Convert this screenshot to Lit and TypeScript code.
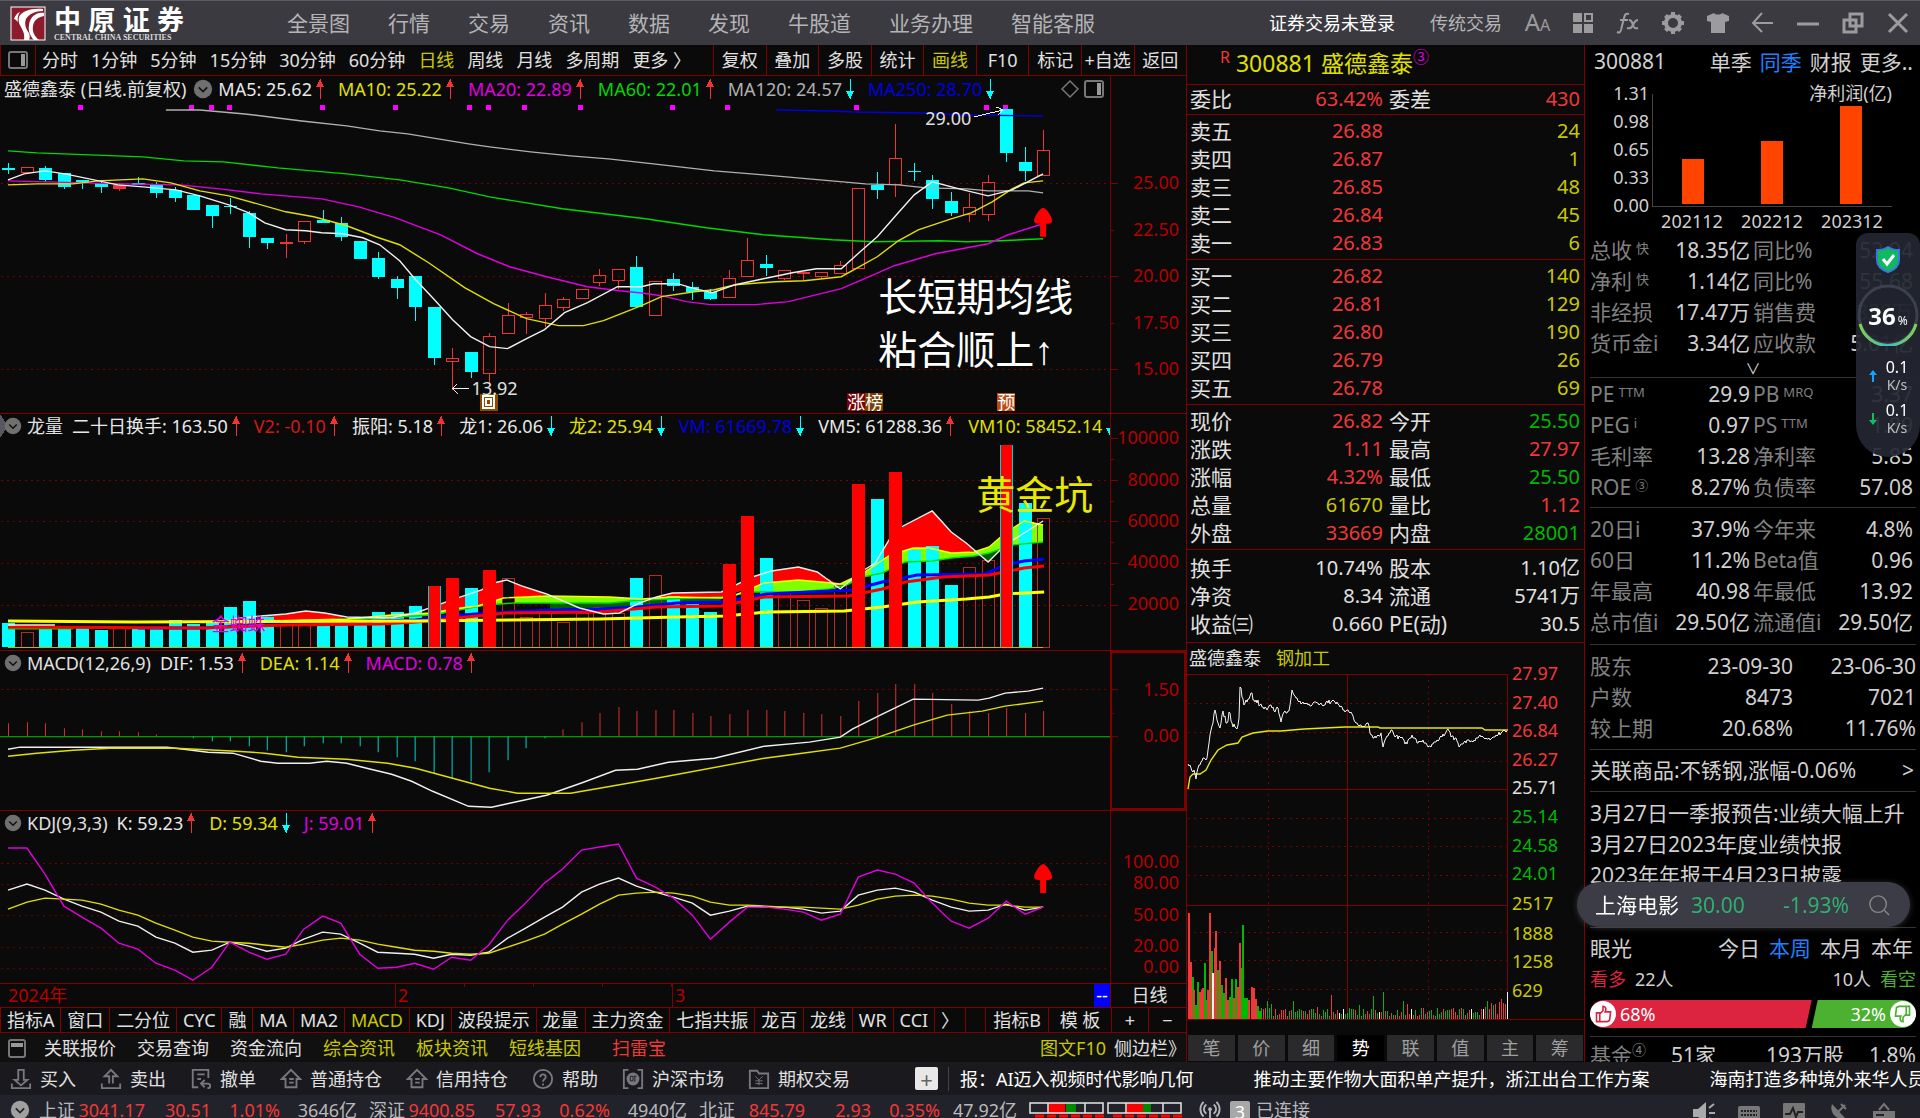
import { LitElement, html, svg, css, nothing } from "lit";
import { customElement } from "lit/decorators.js";
import { classMap } from "lit/directives/class-map.js";
import { styleMap } from "lit/directives/style-map.js";

type Pt = [number, number];

/* ---------- daily chart data ---------- */

const STEP = 18.5;
const FIRST = 8;
const cx = (i: number) => Math.round(FIRST + STEP * i);

// [kind, body top, body bottom, high, low]; d = falling, u = rising, f = rising drawn solid
const CANDLES: [string, number, number, number, number][] = [
  ["d", 168, 170, 163, 174], ["u", 167, 172, 167, 172], ["d", 168, 180, 166, 182], ["d", 173, 187, 173, 189],
  ["d", 180, 183, 180, 189], ["d", 183, 187, 182, 193], ["f", 185, 189, 183, 191], ["d", 183, 185, 177, 185],
  ["d", 185, 193, 182, 198], ["d", 190, 198, 187, 202], ["d", 195, 210, 195, 210], ["d", 205, 216, 205, 228],
  ["d", 206, 207, 198, 214], ["d", 213, 237, 211, 248], ["d", 238, 243, 238, 249], ["f", 242, 244, 234, 258],
  ["u", 221, 241, 221, 244], ["d", 220, 223, 210, 223], ["d", 223, 237, 217, 241], ["d", 241, 259, 241, 259],
  ["d", 258, 277, 252, 279], ["d", 279, 288, 276, 299], ["d", 276, 307, 276, 321], ["d", 307, 358, 307, 365],
  ["u", 358, 361, 348, 390], ["d", 352, 372, 352, 378], ["u", 336, 373, 333, 384], ["u", 315, 333, 303, 333],
  ["u", 314, 317, 312, 334], ["u", 305, 318, 293, 327], ["u", 299, 307, 297, 311], ["u", 289, 298, 289, 298],
  ["u", 275, 282, 269, 286], ["u", 269, 280, 269, 289], ["d", 267, 307, 256, 307], ["u", 281, 315, 281, 315],
  ["d", 279, 286, 273, 291], ["d", 287, 292, 282, 300], ["d", 292, 299, 289, 300], ["u", 278, 297, 270, 297],
  ["u", 260, 276, 238, 276], ["d", 264, 268, 255, 276], ["u", 270, 278, 270, 280], ["f", 272, 274, 272, 281],
  ["u", 272, 276, 272, 278], ["u", 265, 273, 261, 273], ["u", 188, 268, 188, 269], ["d", 185, 190, 172, 199],
  ["u", 158, 184, 124, 197], ["d", 171, 172, 163, 181], ["d", 180, 199, 175, 209], ["d", 201, 213, 192, 216],
  ["u", 207, 214, 193, 222], ["u", 182, 214, 175, 221], ["d", 109, 153, 109, 162], ["d", 162, 171, 147, 181],
  ["u", 150, 175, 130, 175],
];

const MA: { color: string; pts: Pt[] }[] = [
  { color: "#0000e0", pts: [[777, 110], [833, 111], [854, 112], [923, 113], [968, 115], [1044, 116]] },
  { color: "#b0b0b0", pts: [[166, 110], [200, 110], [245, 114], [302, 121], [347, 126], [380, 131], [408, 134], [469, 144], [490, 147], [531, 152], [571, 156], [609, 159], [654, 164], [715, 171], [764, 175], [821, 180], [866, 184], [899, 185], [927, 188], [968, 189], [989, 191], [1029, 191], [1044, 193]] },
  { color: "#00d800", pts: [[8, 151], [37, 153], [143, 157], [184, 161], [224, 162], [278, 168], [347, 174], [400, 180], [449, 188], [490, 197], [563, 209], [646, 219], [707, 228], [764, 235], [833, 240], [874, 242], [940, 241], [968, 242], [1001, 241], [1044, 239]] },
  { color: "#e000e0", pts: [[8, 181], [122, 184], [180, 185], [220, 189], [261, 194], [322, 199], [359, 207], [396, 218], [441, 235], [478, 254], [510, 267], [547, 277], [588, 287], [620, 291], [640, 293], [662, 296], [687, 302], [711, 305], [756, 305], [789, 302], [842, 289], [870, 277], [895, 266], [936, 254], [989, 244], [1009, 235], [1044, 224]] },
  { color: "#e0e000", pts: [[8, 185], [37, 184], [73, 184], [98, 181], [143, 179], [171, 183], [200, 191], [229, 196], [286, 212], [314, 217], [347, 226], [376, 237], [400, 245], [429, 263], [465, 288], [494, 304], [527, 319], [559, 326], [584, 326], [604, 321], [642, 306], [662, 297], [695, 292], [715, 290], [736, 285], [776, 282], [805, 281], [842, 277], [878, 257], [899, 241], [919, 230], [952, 219], [972, 213], [993, 202], [1013, 189], [1025, 183], [1044, 181]] },
  { color: "#f0f0f0", pts: [[8, 180], [24, 174], [45, 171], [65, 174], [94, 180], [118, 185], [143, 187], [176, 190], [200, 196], [229, 205], [249, 213], [265, 223], [286, 230], [306, 231], [322, 233], [343, 234], [363, 238], [380, 245], [400, 261], [416, 280], [433, 298], [453, 320], [471, 337], [490, 347], [508, 349], [527, 339], [545, 330], [565, 313], [588, 303], [618, 287], [642, 287], [654, 284], [678, 284], [695, 289], [713, 293], [736, 285], [764, 279], [793, 273], [817, 269], [842, 269], [862, 251], [878, 237], [899, 213], [915, 195], [933, 182], [960, 189], [989, 196], [1013, 190], [1044, 174]] },
];

const EVENT_DOTS = [80, 191, 211, 229, 322, 395, 469, 488, 524, 580, 673, 728, 857, 987, 1006];

// [kind, top]; c = cyan, h = hollow, k = hollow on black, r = solid red, e = solid red with cyan edge
const VOLUME: [string, number][] = [
  ["c", 623], ["h", 632], ["c", 627], ["c", 627], ["c", 627], ["c", 630], ["h", 628], ["c", 627], ["c", 627], ["c", 620],
  ["c", 624], ["c", 623], ["c", 607], ["c", 601], ["c", 617], ["h", 624], ["h", 618], ["c", 622], ["c", 622], ["c", 621],
  ["c", 612], ["c", 612], ["c", 606], ["e", 586], ["r", 578], ["c", 588], ["r", 570], ["k", 578], ["h", 617], ["h", 613],
  ["h", 622], ["h", 613], ["h", 607], ["h", 613], ["c", 578], ["h", 575], ["c", 596], ["c", 603], ["c", 612], ["r", 564],
  ["r", 516], ["c", 558], ["h", 593], ["h", 600], ["h", 608], ["h", 585], ["r", 484], ["c", 499], ["r", 472], ["c", 550],
  ["c", 546], ["c", 585], ["h", 567], ["h", 560], ["e", 445], ["c", 503], ["h", 518],
];

const VM5: Pt[] = [[233, 619], [261, 616], [286, 614], [306, 611], [325, 613], [347, 617], [390, 618], [416, 613], [441, 604], [461, 597], [482, 590], [494, 583], [507, 580], [522, 586], [547, 594], [580, 608], [604, 614], [620, 613], [638, 604], [657, 597], [673, 593], [722, 592], [753, 577], [772, 571], [799, 567], [818, 572], [841, 589], [860, 573], [876, 563], [891, 538], [902, 527], [933, 511], [952, 532], [967, 543], [989, 562], [1006, 545], [1025, 533], [1044, 521]];
const VM10: Pt[] = [[233, 622], [347, 619], [370, 617], [392, 615], [433, 613], [453, 609], [478, 606], [504, 598], [547, 596], [610, 597], [642, 599], [673, 597], [722, 598], [734, 596], [753, 588], [765, 583], [799, 580], [822, 582], [841, 584], [864, 573], [891, 555], [914, 548], [930, 548], [952, 553], [975, 552], [990, 547], [1006, 533], [1025, 521], [1044, 525]];
const VM20: Pt[] = [[233, 622], [347, 620], [433, 615], [486, 605], [514, 603], [610, 603], [642, 600], [722, 597], [753, 592], [799, 592], [830, 589], [845, 586], [864, 577], [883, 573], [906, 562], [933, 561], [952, 558], [975, 556], [990, 553], [1013, 545], [1044, 542]];
const RED_AREAS: Pt[][] = [
  [[261, 617], [286, 614], [306, 611], [325, 613], [347, 617], [325, 620], [261, 622]],
  [[441, 604], [461, 597], [482, 590], [494, 583], [507, 580], [522, 586], [547, 595], [514, 598], [504, 599], [478, 607], [441, 612]],
  [[657, 597], [673, 593], [722, 592], [753, 577], [772, 571], [799, 567], [818, 572], [836, 583], [799, 580], [765, 583], [745, 590], [722, 597]],
  [[864, 573], [876, 563], [891, 538], [902, 527], [933, 511], [952, 532], [967, 543], [977, 551], [952, 553], [930, 548], [914, 548], [891, 556]],
];
const VOL_LINES: { color: string; pts: Pt[] }[] = [
  { color: "#00e000", pts: [[8, 628], [73, 628]] },
  { color: "#0000ff", pts: [[138, 628], [204, 628], [286, 623], [416, 620], [449, 616], [490, 613], [551, 610], [600, 609], [638, 607], [677, 603], [722, 602], [768, 594], [853, 590], [883, 582], [918, 575], [986, 574], [1006, 565], [1025, 561], [1045, 559]] },
  { color: "#ff0000", pts: [[8, 627], [204, 628], [286, 625], [380, 624], [416, 622], [457, 618], [506, 613], [600, 612], [657, 607], [722, 606], [765, 597], [849, 596], [883, 589], [906, 582], [944, 577], [990, 575], [1025, 568], [1045, 566]] },
  { color: "#ffff00", pts: [[8, 621], [135, 622], [416, 621], [600, 619], [677, 617], [726, 616], [768, 612], [845, 611], [883, 607], [918, 602], [967, 599], [990, 597], [1006, 594], [1045, 592]] },
];

const HIST = [724, 723, 724, 729, 730, 732, 732, 733, 735, 737, 739, 742, 742, 747, 751, 753, 747, 744, 744, 747, 753, 758, 762, 774, 779, 782, 773, 761, 749, 739, 730, 723, 714, 708, 712, 711, 711, 714, 717, 715, 711, 711, 712, 714, 715, 717, 702, 694, 685, 685, 694, 705, 712, 714, 709, 714, 712];
const DIF: Pt[] = [[8, 750], [20, 748], [167, 748], [184, 750], [208, 753], [233, 754], [261, 762], [278, 764], [310, 764], [327, 762], [347, 764], [367, 769], [392, 775], [412, 782], [433, 792], [469, 807], [492, 808], [510, 804], [547, 796], [584, 783], [616, 771], [638, 770], [669, 763], [715, 759], [765, 747], [810, 743], [841, 738], [853, 730], [883, 715], [914, 700], [979, 701], [990, 699], [1006, 694], [1029, 692], [1044, 689]];
const DEA: Pt[] = [[8, 757], [37, 754], [73, 751], [110, 749], [176, 749], [237, 752], [265, 754], [298, 758], [347, 760], [388, 764], [416, 769], [453, 779], [490, 789], [518, 794], [571, 794], [600, 789], [657, 779], [765, 759], [803, 754], [841, 749], [879, 738], [914, 726], [948, 716], [983, 712], [1006, 707], [1044, 702]];

const K = [890, 884, 890, 899, 906, 912, 921, 926, 937, 943, 952, 950, 942, 946, 951, 948, 939, 932, 934, 943, 952, 953, 954, 958, 954, 955, 952, 938, 928, 917, 907, 892, 884, 878, 886, 892, 897, 903, 915, 911, 906, 907, 907, 909, 913, 911, 895, 890, 888, 892, 900, 907, 911, 910, 904, 910, 907];
const D = [909, 902, 898, 899, 900, 904, 910, 915, 923, 930, 937, 941, 942, 943, 945, 947, 944, 940, 938, 940, 944, 947, 950, 951, 953, 954, 953, 947, 941, 934, 924, 914, 904, 895, 893, 892, 893, 896, 902, 905, 905, 906, 907, 907, 908, 909, 905, 899, 896, 895, 896, 899, 903, 905, 905, 907, 907];
const J = [848, 848, 874, 906, 917, 928, 943, 949, 963, 970, 980, 967, 942, 952, 959, 954, 929, 916, 923, 954, 968, 967, 963, 969, 957, 960, 945, 920, 903, 883, 869, 850, 847, 844, 878, 887, 898, 915, 939, 922, 907, 907, 909, 912, 920, 914, 877, 870, 874, 883, 903, 921, 928, 918, 901, 914, 907];

/* ---------- intraday data ---------- */

const PRICE: Pt[] = [[1188, 764], [1191, 768], [1194, 770], [1196, 779], [1198, 768], [1201, 762], [1204, 758], [1206, 760], [1209, 743], [1211, 730], [1213, 723], [1215, 710], [1218, 723], [1220, 728], [1223, 711], [1226, 723], [1230, 713], [1232, 723], [1237, 729], [1239, 718], [1240, 687], [1244, 705], [1247, 702], [1252, 693], [1254, 700], [1260, 705], [1267, 710], [1271, 705], [1274, 711], [1278, 708], [1281, 722], [1284, 712], [1289, 711], [1292, 690], [1296, 698], [1302, 703], [1310, 706], [1317, 703], [1322, 705], [1332, 701], [1338, 704], [1343, 710], [1351, 712], [1355, 722], [1362, 727], [1368, 723], [1371, 735], [1376, 738], [1381, 733], [1383, 747], [1386, 738], [1391, 730], [1395, 737], [1400, 737], [1407, 744], [1412, 735], [1418, 743], [1423, 740], [1428, 747], [1435, 742], [1442, 737], [1448, 729], [1451, 737], [1455, 738], [1459, 747], [1468, 740], [1475, 741], [1480, 735], [1487, 739], [1494, 737], [1501, 733], [1507, 731]];
const AVG: Pt[] = [[1188, 789], [1190, 777], [1193, 774], [1200, 774], [1206, 770], [1211, 760], [1218, 750], [1227, 745], [1238, 743], [1242, 737], [1253, 733], [1268, 731], [1281, 731], [1304, 729], [1345, 727], [1378, 727], [1380, 728], [1482, 728], [1485, 730], [1508, 730]];
const OPENING: [number, number, string][] = [
  [1188, 913, "r"], [1190, 962, "r"], [1192, 977, "g"], [1193, 990, "r"], [1195, 1005, "g"], [1197, 982, "g"], [1199, 992, "r"], [1201, 990, "r"],
  [1202, 988, "r"], [1204, 963, "g"], [1205, 1000, "g"], [1207, 990, "r"], [1209, 913, "r"], [1211, 951, "g"], [1212, 973, "w"], [1214, 948, "r"],
  [1215, 931, "r"], [1217, 970, "g"], [1219, 961, "r"], [1221, 985, "g"], [1223, 993, "g"], [1225, 978, "r"], [1227, 1000, "r"], [1229, 997, "g"],
  [1231, 979, "g"], [1233, 998, "r"], [1235, 979, "g"], [1237, 987, "r"], [1239, 943, "r"], [1241, 968, "g"], [1242, 925, "g"], [1244, 998, "g"],
  [1246, 998, "g"], [1248, 1000, "r"], [1251, 987, "r"], [1253, 988, "r"], [1255, 999, "r"], [1257, 1006, "g"],
];
const SPIKES: Record<number, [number, string]> = {
  1267: [1001, "g"], 1271: [1004, "g"], 1293: [1001, "g"], 1317: [1007, "r"], 1331: [995, "r"], 1359: [1005, "g"], 1373: [996, "g"],
  1383: [992, "g"], 1403: [1001, "g"], 1407: [1004, "r"], 1421: [1008, "g"], 1437: [1008, "g"], 1459: [1009, "g"], 1471: [1009, "w"],
  1481: [1009, "r"], 1491: [1003, "r"], 1495: [1004, "r"], 1499: [1002, "r"], 1501: [999, "r"], 1503: [1003, "r"], 1507: [992, "w"],
};
const TONE: Record<string, string> = { r: "#f03838", g: "#00b800", w: "#f0f0f0" };

function noise(seed: number) {
  let s = seed;
  return () => ((s = (s * 1103515245 + 12345) % 2147483648) / 2147483648);
}

function intradayVolume(): [number, number, string][] {
  const rnd = noise(7);
  const bars = [...OPENING];
  for (let x = 1259; x < 1508; x += 2) {
    const late = x > 1478 ? 8 : 0;
    bars.push(SPIKES[x] ? [x, ...SPIKES[x]] : [x, Math.round(1016 - rnd() * 8 - rnd() * late), "rggrw"[Math.floor(rnd() * 4.3)]]);
  }
  return bars;
}

function intradayPrice(): Pt[] {
  const rnd = noise(3);
  const out: Pt[] = [];
  PRICE.forEach(([x, y], n) => {
    out.push([x, y]);
    const next = PRICE[n + 1];
    if (!next) return;
    const amp = x < 1260 ? 7 : 4;
    for (let px = x + 1; px < next[0]; px++) {
      out.push([px, Math.round(y + ((next[1] - y) * (px - x)) / (next[0] - x) + (rnd() - 0.5) * amp)]);
    }
  });
  return out;
}

/* ---------- drawing helpers ---------- */

const join = (pts: Pt[]) => pts.map((p) => p.join(",")).join(" ");
const line = (pts: Pt[], color: string, width = 1.4) =>
  svg`<polyline class="curve" points=${join(pts)} fill="none" stroke=${color} stroke-width=${width} />`;
const series = (ys: number[]): Pt[] => ys.map((y, i) => [cx(i), y]);
const dotted = (ys: number[], x1: number, x2: number) =>
  ys.map((y) => svg`<path class="dots" d="M${x1} ${y + 0.5}H${x2}" />`);
const ticks = (major: number[], minor: number[]) => svg`
  ${major.map((y) => svg`<path class="rule" d="M1111 ${y + 0.5}h8" />`)}
  ${minor.map((y) => svg`<path class="rule" d="M1111 ${y + 0.5}h4" />`)}`;
const bigArrow = (y: number) =>
  svg`<path class="curve" d="M1044 ${y}c3 0 9 9 9 13 0 3-3 3-6 3v13h-6v-13c-3 0-6 0-6-3 0-4 6-13 9-13z" fill="#f00" />`;

function candle([kind, top, bottom, high, low]: (typeof CANDLES)[number], i: number) {
  const x = cx(i);
  const h = Math.max(bottom - top, 1);
  if (kind === "u") {
    return svg`<path d="M${x + 0.5} ${high}V${top}M${x + 0.5} ${bottom}V${low}" stroke="#f03434" />
      <rect x=${x - 5.5} y=${top + 0.5} width="12" height=${h} fill="none" stroke="#f03434" />`;
  }
  const color = kind === "d" ? "#00ffff" : "#f03434";
  return svg`<path d="M${x + 0.5} ${high}V${low}" stroke=${color} /><rect x=${x - 6} y=${top} width="13" height=${h} fill=${color} />`;
}

function volumeBar(kind: string, top: number, i: number) {
  const x = cx(i);
  const h = 647 - top;
  if (kind === "h" || kind === "k") {
    return svg`<rect x=${x - 5.5} y=${top + 0.5} width="12" height=${h} fill=${kind === "k" ? "#0a0a0a" : "none"} stroke="#b82828" />`;
  }
  if (kind === "e") {
    return svg`<rect x=${x - 6} y=${top} width="13" height=${h} fill="#00d0d0" /><rect x=${x - 5} y=${top} width="11" height=${h} fill="#ff0000" />`;
  }
  return svg`<rect x=${x - 6} y=${top} width="13" height=${h} fill=${kind === "c" ? "#00ffff" : "#ff0000"} />`;
}

const icon = (body: unknown, size = 24, box = 24) =>
  html`<svg class="icon" width=${size} height=${size} viewBox="0 0 ${box} ${box}" aria-hidden="true">${body}</svg>`;

const ICON = {
  grid: svg`<path d="M2 2h9v9H2zM2 13h9v9H2zM13 13h9v9h-9z" fill="currentColor"/><path d="M14 3h7v7h-7z" fill="none" stroke="currentColor" stroke-width="2"/>`,
  fx: svg`<path d="M13 3c-3-1-4 0-5 4L5 19c-1 3-2 3-4 2M4 9h8M13 9c3 0 3 2 4 5s2 4 5 3M22 9c-3 0-4 3-5 5s-3 4-6 3" fill="none" stroke="currentColor" stroke-width="2"/>`,
  gear: svg`<path d="M10 1h4v4h-4zM10 19h4v4h-4zM1 10h4v4H1zM19 10h4v4h-4zM3 6l3-3 3 3-3 3zM15 6l3-3 3 3-3 3zM3 18l3-3 3 3-3 3zM15 18l3-3 3 3-3 3z" fill="currentColor"/><circle cx="12" cy="12" r="7" fill="none" stroke="currentColor" stroke-width="4"/>`,
  shirt: svg`<path d="M8 2c1 2 7 2 8 0l7 3 0 5-4 1v11H5V11l-4-1V5z" fill="currentColor"/>`,
  back: svg`<path d="M11 2L2 12l9 9M2 12h20" fill="none" stroke="currentColor" stroke-width="2"/>`,
  min: svg`<path d="M1 13h22" stroke="currentColor" stroke-width="3"/>`,
  restore: svg`<path d="M9 3h12v12H9zM3 9h12v12H3z" fill="none" stroke="currentColor" stroke-width="3"/>`,
  close: svg`<path d="M3 3l18 18M21 3L3 21" stroke="currentColor" stroke-width="3"/>`,
  panel: svg`<rect x="3" y="4" width="18" height="16" rx="2" fill="none" stroke="#777" stroke-width="2"/><path d="M15 6h4v12h-4z" fill="#999"/>`,
  win: svg`<rect x="4" y="4" width="16" height="17" rx="2" fill="none" stroke="#777" stroke-width="2"/><path d="M6 7h12v4H6z" fill="#999"/>`,
  down: svg`<path d="M9 2h6v11h4l-7 6-7-6h4zM2 17v5h20v-5" fill="none" stroke="currentColor" stroke-width="2"/>`,
  up: svg`<path d="M10 17V9H5l7-7 7 7h-5v8M2 17v5h20v-5" fill="none" stroke="currentColor" stroke-width="2"/>`,
  cancel: svg`<path d="M9 21H3V2h17v9M8 7h8M8 12h4M13 17h6c4 0 4 5 0 5M16 13l-4 4 4 4" fill="none" stroke="currentColor" stroke-width="2"/>`,
  home: svg`<path d="M2 12L12 2l10 10h-4v9H6v-9zM10 12h5M10 16h5" fill="none" stroke="currentColor" stroke-width="2"/>`,
  help: svg`<circle cx="12" cy="12" r="10" fill="none" stroke="currentColor" stroke-width="2"/><path d="M9 10c0-4 6-4 6 0 0 2-3 2-3 5M12 17v2" fill="none" stroke="currentColor" stroke-width="2"/>`,
  market: svg`<path d="M7 2H2v20h5M17 2h5v20h-5" fill="none" stroke="currentColor" stroke-width="2"/><circle cx="12" cy="12" r="7" fill="currentColor"/><path d="M9 9h3v5H9zM13 9h3M14 9v6" fill="none" stroke="#1a1a1e"/>`,
  option: svg`<path d="M2 3h8l2 3h10v16H2z" fill="none" stroke="currentColor" stroke-width="2"/><path d="M8 9l4 4 4-4M8 14h8M8 17h8M12 13v6" fill="none" stroke="currentColor"/>`,
  chevron: svg`<circle cx="12" cy="12" r="11" fill="#707070"/><path d="M7 10l5 5 5-5" fill="none" stroke="#111" stroke-width="2"/>`,
  chevronLight: svg`<circle cx="12" cy="12" r="11" fill="#a0a0a0"/><path d="M7 10l5 5 5-5" fill="none" stroke="#222" stroke-width="2"/>`,
  diamond: svg`<path d="M12 4l8 8-8 8-8-8z" fill="none" stroke="#777" stroke-width="1.500"/>`,
  antenna: svg`<path d="M12 12v10" stroke="currentColor" stroke-width="2"/><circle cx="12" cy="10" r="2" fill="currentColor"/><path d="M8 15a6 6 0 010-10M16 5a6 6 0 010 10M5 18a11 11 0 010-16M19 2a11 11 0 010 16" fill="none" stroke="currentColor" stroke-width="2"/>`,
  speaker: svg`<path d="M1 8h5l8-7v22l-8-7H1z" fill="#aaa"/><path d="M17 7l5-4M17 12h6M17 17l5 4" stroke="#aaa" stroke-width="2"/>`,
  keyboard: svg`<rect x="1" y="5" width="22" height="16" rx="2" fill="#777"/><path d="M4 10h16M4 14h16" stroke="#222" stroke-width="2" stroke-dasharray="2 1"/><path d="M7 18h10" stroke="#222" stroke-width="2"/>`,
  pulse: svg`<rect x="1" y="2" width="22" height="18" rx="1" fill="#777"/><path d="M3 13h5l3-6 3 9 2-5h5" fill="none" stroke="#222" stroke-width="2"/>`,
  dish: svg`<path d="M5 3c-3 8 4 17 14 15z" fill="#777"/><path d="M11 11l7-7M14 3l5 5" stroke="#777" stroke-width="2"/>`,
  board: svg`<path d="M1 10h22v14H1z" fill="#777"/><path d="M7 9l5-6 5 6" fill="none" stroke="#777" stroke-width="2"/><path d="M4 14h8M4 18h6" stroke="#222" stroke-width="2"/>`,
  search: svg`<circle cx="11" cy="11" r="9" fill="none" stroke="#888" stroke-width="1.500"/><path d="M18 18l5 5" stroke="#888" stroke-width="1.500"/>`,
  thumb: svg`<circle cx="12" cy="12" r="12" fill="#fff"/><path d="M6 11h3v8H6zM9 12l3-3V5c3 0 3 3 2 5h5l-1 8-2 1H9" fill="none" stroke="currentColor" stroke-width="1.500"/>`,
};

const trend = (dir: "up" | "dn" | "") =>
  dir === ""
    ? nothing
    : html`<svg class="trend" width="8" height="22" viewBox="0 0 8 22" aria-label=${dir === "up" ? "升" : "降"}>
        ${dir === "up"
          ? svg`<path d="M4 1v20" stroke="#f03434"/><path d="M4 1l4 8H0z" fill="#f03434"/>`
          : svg`<path d="M4 1v20" stroke="#0ff"/><path d="M4 21l4-8H0z" fill="#0ff"/>`}
      </svg>`;

type Legend = [string, string, "up" | "dn" | ""];
const legendItems = (items: Legend[]) =>
  items.map(([text, tone, dir]) => html`<span class="lg ${tone}">${text}${trend(dir)}</span>`);

// Vertical scale: spacers grow in proportion to the distance between neighbouring labels.
function scale(labels: [string, number, string?][], top: number, bottom: number) {
  let prev = top;
  const rows = labels.map(([text, y, tone]) => {
    const grow = y - 10 - prev;
    prev = y + 10;
    return html`<i class="sp" style=${styleMap({ flexGrow: String(grow) })}></i><span class="tick ${tone ?? ""}">${text}</span>`;
  });
  return html`<div class="scale">${rows}<i class="sp" style=${styleMap({ flexGrow: String(bottom - prev) })}></i></div>`;
}

const note = (x: number, y: number, w: number, top: number, h: number, cls: string, body: unknown) =>
  html`<span class="note ${cls}" style=${styleMap({ left: `${(x / w) * 100}%`, top: `${((y - top) / h) * 100}%` })}>${body}</span>`;

/* ---------- text data ---------- */

const MENU = ["全景图", "行情", "交易", "资讯", "数据", "发现", "牛股道", "业务办理", "智能客服"];
const PERIODS = ["分时", "1分钟", "5分钟", "15分钟", "30分钟", "60分钟", "日线", "周线", "月线", "多周期", "更多 〉"];
const ACTIONS = ["复权", "叠加", "多股", "统计", "画线", "F10", "标记", "+自选", "返回"];
const TABS = ["指标A", "窗口", "二分位", "CYC", "融", "MA", "MA2", "MACD", "KDJ", "波段提示", "龙量", "主力资金", "七指共振", "龙百", "龙线", "WR", "CCI", "〉", ""];

type Row = [string, string, string, string, string, string];
const SELL: Row[] = [["卖五", "26.88", "r", "", "24", "y"], ["卖四", "26.87", "r", "", "1", "y"], ["卖三", "26.85", "r", "", "48", "y"], ["卖二", "26.84", "r", "", "45", "y"], ["卖一", "26.83", "r", "", "6", "y"]];
const BUY: Row[] = [["买一", "26.82", "r", "", "140", "y"], ["买二", "26.81", "r", "", "129", "y"], ["买三", "26.80", "r", "", "190", "y"], ["买四", "26.79", "r", "", "26", "y"], ["买五", "26.78", "r", "", "69", "y"]];
const DEAL: Row[] = [["现价", "26.82", "r", "今开", "25.50", "g"], ["涨跌", "1.11", "r", "最高", "27.97", "r"], ["涨幅", "4.32%", "r", "最低", "25.50", "g"], ["总量", "61670", "y", "量比", "1.12", "r"], ["外盘", "33669", "r", "内盘", "28001", "g"]];
const BASIC: Row[] = [["换手", "10.74%", "w", "股本", "1.10亿", "w"], ["净资", "8.34", "w", "流通", "5741万", "w"], ["收益㈢", "0.660", "w", "PE(动)", "30.5", "w"]];

// [label, mark, value, label, mark, value]
type Fact = [string, string, string, string, string, string];
const FACTS_A: Fact[] = [["总收", "快", "18.35亿", "同比%", "", "52.94"], ["净利", "快", "1.14亿", "同比%", "", "55.68"], ["非经损", "", "17.47万", "销售费", "", "338万"], ["货币金i", "", "3.34亿", "应收款", "", "5.01亿"]];
const FACTS_B: Fact[] = [["PE", "TTM", "29.9", "PB", "MRQ", "3.37"], ["PEG", "i", "0.97", "PS", "TTM", "1.89"], ["毛利率", "", "13.28", "净利率", "", "5.85"], ["ROE", "③", "8.27%", "负债率", "", "57.08"]];
const FACTS_C: Fact[] = [["20日i", "", "37.9%", "今年来", "", "4.8%"], ["60日", "", "11.2%", "Beta值", "", "0.96"], ["年最高", "", "40.98", "年最低", "", "13.92"], ["总市值i", "", "29.50亿", "流通值i", "", "29.50亿"]];

@customElement("app-root")
export class AppRoot extends LitElement {
  static styles = css`
    :host {
      display: flex;
      flex-direction: column;
      height: 100vh;
      overflow: hidden;
      background: #0a0a0a;
      color: #e0e0e0;
      font: 18px/24px "Noto Sans", "Noto Sans CJK SC", sans-serif;
      white-space: nowrap;
    }
    *, *::before, *::after { box-sizing: border-box; }
    button { font: inherit; color: inherit; background: none; border: 0; padding: 0; margin: 0; cursor: pointer; white-space: nowrap; }
    a { color: inherit; text-decoration: none; }
    .icon { display: block; flex: none; }
    .r { color: #f03838; } .y { color: #c8c800; } .g { color: #00b800; } .w { color: #e0e0e0; }
    .hot { color: #c8c800; }

    .top { display: flex; align-items: center; flex: none; height: 45px; background: #3b3a40; border-top: 1px solid #5c5c62; color: #b4b4b6; }
    .brand { display: flex; align-items: center; gap: 8px; width: 287px; padding-left: 10px; }
    .brandname { display: flex; flex-direction: column; width: 130px; color: #fff; }
    .cn { display: flex; justify-content: space-between; font: 700 27px/28px "Noto Sans CJK SC", sans-serif; }
    .en { font: 700 8px/9px "Liberation Serif", serif; color: #d8d8d8; }
    .menu { display: flex; flex: 1; gap: 38px; font-size: 21px; line-height: 38px; }
    .login { color: #fff; margin-right: 35px; }
    .classic { margin-right: 13px; }
    .tools { display: flex; }
    .tool { width: 45px; height: 40px; display: flex; align-items: center; justify-content: center; color: #9c9c9e; }
    .aa { font-size: 24px; } .aa small { font-size: 16px; }

    .main { flex: 1; min-height: 0; display: grid; grid-template-columns: minmax(0, 1fr) 398px 335px; grid-template-rows: minmax(0, 1fr); }
    .left, .mid, .side { display: flex; flex-direction: column; min-height: 0; min-width: 0; }
    .left { border-right: 1px solid #800000; }

    .bar { flex: none; height: 31px; display: grid; grid-template-columns: 35px minmax(0, 1fr) 473px; border-bottom: 1px solid #800000; line-height: 29px; }
    .bar > * { border-left: 1px solid #800000; }
    .pin { display: flex; align-items: center; justify-content: center; }
    .periods { display: flex; gap: 13px; padding-left: 6px; overflow: hidden; }
    .actions { display: flex; border-left: 0; }
    .actions button { flex: 1 1 0; min-width: 0; border-left: 1px solid #800000; overflow: hidden; text-align: center; }

    .pane { position: relative; min-height: 0; display: grid; grid-template-columns: minmax(0, 1fr) 76px; grid-template-rows: auto minmax(0, 1fr); border-bottom: 1px solid #800000; overflow: hidden; }
    .price { flex: 338 1 0; } .volume { flex: 238 1 0; } .macd { flex: 159 1 0; } .kdj { flex: 173 1 0; }
    .plot { grid-area: 1 / 1 / 3 / 3; width: 100%; height: 100%; display: block; shape-rendering: crispEdges; }
    .curve { shape-rendering: auto; }
    .legend { grid-area: 1 / 1; display: flex; align-items: center; padding: 0 4px; line-height: 24px; overflow: hidden; }
    .price .legend { padding-top: 1px; }
    .legend .icon { margin-right: 5px; }
    .legend .end { display: flex; margin-left: auto; }
    .legend .end .icon { margin: 0; }
    .name { margin-right: 9px; }
    .price .name { margin-right: 7px; }
    .lg { display: flex; align-items: center; gap: 4px; margin-right: 14px; flex: none; }
    .trend { display: block; flex: none; shape-rendering: crispEdges; }
    .m-y { color: #e0e000; } .m-p { color: #e000e0; } .m-g { color: #00d800; } .m-s { color: #b0b0b0; } .m-b { color: #0000e0; } .m-r { color: #d01818; } .m-w { color: #e8e8e8; }
    .scale { grid-area: 1 / 2 / 3 / 3; display: flex; flex-direction: column; align-items: flex-end; padding-right: 7px; color: #b40000; }
    .sp { flex: 0 1 0; }
    .tick { flex: none; height: 20px; line-height: 19px; }
    .rule { stroke: #800000; fill: none; }
    .dots { stroke: #780000; fill: none; stroke-dasharray: 2 4; }
    .note { position: absolute; transform: translateY(-50%); line-height: 20px; }
    .big { font-size: 39px; line-height: 53px; color: #fff; }
    .thin { font-family: "Liberation Sans", sans-serif; }
    .pit { font-size: 39px; line-height: 53px; color: #e8e800; }
    .tag { display: flex; color: #fff; }
    .tag b { font-weight: 400; width: 18px; line-height: 18px; text-align: center; }
    .t1 { background: #7a0000; } .t2 { background: #7a3e00; } .t3 { background: #b84a12; }

    .dates { flex: none; height: 24px; display: grid; grid-template-columns: 395fr 277fr 422fr 16px 76px; border-bottom: 1px solid #800000; color: #b80000; line-height: 23px; }
    .dates > * { border-left: 1px solid #800000; padding-left: 2px; }
    .dates .year { border-left: 0; padding-left: 8px; }
    .dates .weeks { background: repeating-linear-gradient(90deg, transparent 0 68px, #800000 68px 69px) top / 100% 3px no-repeat; }
    .dates .cur { background: #0000ff; color: #fff; padding: 0; text-align: center; border: 0; }
    .dates .unit { color: #e0e0e0; text-align: center; }

    .tabs { flex: none; height: 25px; display: grid; grid-template-columns: minmax(0, 1fr) 63px 63px 37px 38px; border-bottom: 1px solid #800000; line-height: 24px; }
    .tabs > button, .tabset button { border-left: 1px solid #800000; }
    .tabset { display: flex; overflow: hidden; }
    .tabset button { flex: 1 0 auto; padding: 0 5px; }
    .tabset .blank { min-width: 20px; }
    .links { flex: none; height: 29px; display: flex; align-items: center; gap: 21px; padding: 0 0 0 5px; background: #101010; }
    .links .icon { margin-right: -6px; }
    .links .mine { margin-left: 10px; }
    .links .far { margin-left: auto; margin-right: -13px; }

    .mid { border-right: 1px solid #800000; }
    .quote { flex: none; display: flex; align-items: flex-start; height: 40px; padding: 4px 0 0 33px; border-bottom: 1px solid #800000; color: #e0e000; font-size: 23px; line-height: 28px; gap: 6px; }
    .quote sup, .quote sub { font-size: 16px; line-height: 16px; }
    .quote sup { color: #e000e0; margin-left: -6px; }
    .quote sub { color: #f03838; }
    table { border-collapse: collapse; width: 100%; table-layout: fixed; }
    th, td { padding: 0; font-weight: 400; text-align: left; overflow: visible; }
    td { text-align: right; }
    .block { flex: none; padding: 2px 4px 2px 3px; border-bottom: 1px solid #800000; font-size: 20px; line-height: 28px; }
    .block tr { height: 28px; }
    .block th { font-size: 21px; }
    .block .c1 { width: 64px; } .block .c3 { width: 74px; }
    .block .c2 { width: 129px; }
    .block th + td + th { padding-left: 6px; }
    .commit { padding: 0 4px 1px 3px; }
    .loose { padding: 4px 4px 4px 3px; }
    .tick-chart { flex: 1; min-height: 0; display: grid; grid-template-columns: minmax(0, 1fr) 76px; grid-template-rows: 31px minmax(0, 1fr); border-bottom: 1px solid #800000; }
    .tick-chart .cap { grid-area: 1 / 1; padding-left: 2px; line-height: 30px; display: flex; gap: 15px; }
    .tick-chart .plot { grid-area: 2 / 1; }
    .tick-chart .scale { align-items: flex-start; padding: 0 0 0 4px; }
    .modes { flex: none; display: flex; gap: 3px; height: 42px; padding: 15px 1px 1px; color: #a0a0a0; }
    .modes button { flex: 1; background: #2a2a2d; text-align: center; }
    .modes .on { background: #000; color: #fff; }

    .side { background: #000; padding: 0 4px 0 5px; font-size: 21px; line-height: 31px; color: #d0d0d0; overflow: hidden; }
    .side > * { flex: none; }
    .head { display: flex; gap: 8px; height: 34px; line-height: 32px; padding: 0 3px 0 4px; }
    .head :first-child { margin-right: auto; }
    .on-blue { color: #1e80ff; }
    .profit { display: grid; grid-template-columns: 62px 240px; grid-template-rows: 128px 27px; font-size: 18px; }
    .levels { grid-area: 1 / 1 / 3 / 2; padding-right: 3px; text-align: right; line-height: 28px; }
    .levels div { height: 28px; }
    .bars { grid-area: 1 / 2; margin-top: 15px; display: flex; align-items: flex-end; justify-content: space-around; padding: 0 2px 2px 0; border-left: 1px solid #444; border-bottom: 1px solid #444; }
    .bars i { width: 22px; background: #ff4400; }
    .profit .unit { grid-area: 1 / 2; justify-self: end; line-height: 28px; }
    .years { grid-area: 2 / 2; display: flex; justify-content: space-around; line-height: 28px; }
    .facts { border-bottom: 1px solid #333; padding: 1px 3px 4px 0; }
    .facts tr { height: 31px; }
    .facts th { color: #808080; }
    .facts .c1 { width: 74px; } .facts .c2 { width: 86px; } .facts .c3 { width: 80px; }
    .facts th + td + th { padding-left: 3px; }
    .facts sup { font-size: 13px; line-height: 13px; margin-left: 4px; vertical-align: 5px; }
    .even { padding: 6px 3px 6px 0; }
    .first { border: 0; padding-bottom: 0; }
    .more { height: 19px; line-height: 14px; text-align: center; border-bottom: 1px solid #333; font-size: 15px; display: block; width: 100%; }
    .holders { border-bottom: 1px solid #333; padding: 6px 0 5px; }
    .holders th { color: #808080; } .holders tr { height: 31px; } .holders .c1 { width: 80px; }
    .goods { display: flex; justify-content: space-between; padding: 5px 2px 5px 0; border-bottom: 1px solid #333; }
    .news { display: flex; flex-direction: column; height: 136px; padding-top: 6px; border-bottom: 1px solid #333; }
    .view { display: flex; gap: 9px; padding: 5px 3px 0 0; }
    .view :first-child { margin-right: auto; }
    .votes { display: flex; gap: 9px; font-size: 18px; }
    .votes .n1 { margin-right: auto; }
    .bull { color: #dc2340; } .bear { color: #4cb030; }
    .split { display: flex; height: 28px; margin: 5px 0 8px; font-size: 18px; line-height: 28px; color: #fff; }
    .split div { display: flex; align-items: center; gap: 4px; }
    .split .up { flex: 68; background: #dc2340; border-radius: 14px 0 0 14px; clip-path: polygon(0 0, 100% 0, calc(100% - 6px) 100%, 0 100%); }
    .split .dn { flex: 32; justify-content: flex-end; background: #4cb030; border-radius: 0 14px 14px 0; clip-path: polygon(6px 0, 100% 0, 100% 100%, 0 100%); }
    .split .up .icon { color: #dc2340; } .split .dn .icon { color: #4cb030; transform: rotate(180deg); }
    .fund { display: flex; justify-content: space-between; padding: 3px 0 0; border-top: 1px solid #333; }
    .fund span:first-child { color: #808080; }
    .fund sup { font-size: 14px; line-height: 14px; }

    .trade { flex: none; height: 33px; display: flex; align-items: center; gap: 24px; padding-left: 10px; background: #1a1a1e; overflow: hidden; }
    .trade button { display: flex; align-items: center; gap: 8px; flex: none; }
    .trade button .icon { color: #78787f; }
    .trade .add { width: 23px; height: 23px; margin-left: 41px; justify-content: center; background: #e8e8e8; color: #666; border-radius: 2px; font-size: 22px; }
    .ticker { display: flex; gap: 60px; padding-left: 11px; border-left: 1px solid #444; color: #fff; margin-left: -14px; }
    .status { flex: none; height: 23px; display: flex; align-items: flex-start; gap: 12px; padding-left: 10px; background: #22232a; line-height: 31px; overflow: hidden; color: #b8b8bc; }
    .status > .icon { margin-top: 5px; margin-right: -3px; }
    .idx { display: grid; grid-template-columns: 36px 70px 66px 69px 77px; flex: none; text-align: right; }
    .meters { flex: none; margin: 7px 4px 0 0; }
    .badge { flex: none; width: 20px; height: 22px; margin: 6px -6px 0 0; background: #a8a8a8; color: #fff; border-radius: 2px; line-height: 22px; text-align: center; }
    .tray { display: flex; gap: 21px; margin: 6px 24px 0 auto; }

    .speed { position: fixed; right: 0; top: 233px; width: 64px; height: 224px; border-radius: 12px 12px 32px 32px; background: rgba(36, 39, 50, 0.93); display: flex; flex-direction: column; align-items: center; color: #fff; padding-top: 13px; }
    .dial { position: relative; margin-top: 11px; }
    .dial svg { display: block; }
    .pct { position: absolute; inset: 0; display: flex; align-items: baseline; justify-content: center; gap: 2px; font-weight: 700; font-size: 24px; line-height: 64px; }
    .pct small { font-size: 12px; font-weight: 400; }
    .rate { display: grid; grid-template-columns: 8px auto; column-gap: 9px; align-items: center; font-size: 16px; line-height: 18px; margin-top: 12px; text-align: center; padding-left: 1px; }
    .rate small { font-size: 14px; line-height: 17px; color: #c0c0c0; grid-column: 2; }
    .rate svg { grid-row: 1 / 3; }
    .rate + .rate { margin-top: 8px; }
    .pill { position: fixed; right: 10px; top: 882px; width: 333px; height: 45px; padding: 0 20px 0 18px; display: flex; align-items: center; border-radius: 23px; background: #3b3c46; box-shadow: 0 1px 6px rgba(120, 120, 130, 0.4); color: #fff; font-size: 21px; }
    .pill .p { color: #30b070; margin-left: 12px; } .pill .c { color: #30b070; margin: 0 19px 0 auto; }
  `;

  private topBar() {
    return html`<header class="top">
      <div class="brand">
        <svg width="36" height="35" viewBox="0 0 36 35" aria-hidden="true">
          <rect x="1" y="1" width="34" height="33" fill="#8e1b2c" stroke="#fff" />
          <path d="M9 11C12 5 21 2 33 3v2c-8 0-14 3-17 8-2 5 0 10 3 14 1 3 1 5 0 7h-5c1-6-1-9-3-13-2-3-3-6-2-10z" fill="#fff" />
          <path d="M34 7c-8-1-14 4-15 12-1 6 1 11 5 15h5c-5-4-7-9-6-14 1-6 5-9 11-10z" fill="#fff" />
          <path d="M4 13c1-3 3-6 6-7-2 3-3 6-2 10-2-2-3-3-4-3z" fill="#fff" />
        </svg>
        <div class="brandname">
          <div class="cn"><span>中</span><span>原</span><span>证</span><span>券</span></div>
          <div class="en">CENTRAL CHINA SECURITIES</div>
        </div>
      </div>
      <nav class="menu">${MENU.map((m) => html`<a href="#">${m}</a>`)}</nav>
      <button class="login">证券交易未登录</button>
      <button class="classic">传统交易</button>
      <div class="tools">
        <button class="tool aa" aria-label="字体"><span>A<small>A</small></span></button>
        ${[ICON.grid, ICON.fx, ICON.gear, ICON.shirt, ICON.back, ICON.min, ICON.restore, ICON.close].map(
          (g) => html`<button class="tool">${icon(g, 24)}</button>`,
        )}
      </div>
    </header>`;
  }

  private pricePane() {
    const at = (x: number, y: number, cls: string, body: unknown) => note(x, y, 1187, 76, 337, cls, body);
    return html`<section class="pane price">
      <svg class="plot" viewBox="0 76 1187 337" preserveAspectRatio="none">
        ${dotted([183, 276, 369], 1, 1111)} ${ticks([183, 276, 369], [230, 323])}
        <path class="rule" d="M1111.5 76V413" />
        ${EVENT_DOTS.map((x) => svg`<rect x=${x - 2} y="105" width="5" height="5" fill="#f0f" />`)}
        ${CANDLES.map(candle)} ${MA.map((m) => line(m.pts, m.color))}
        ${bigArrow(208)}
        <path d="M975 117L1004 110M997 107l7 3-5 5M469 389H453M458 384l-5 5 5 5" fill="none" stroke="#f0f0f0" />
        <rect x="480" y="394" width="18" height="17" fill="#8a4a00" />
        <path d="M483.500 396.500h11v12h-11zM486.500 399.500h5v6h-5z" fill="none" stroke="#fff" stroke-width="2" />
      </svg>
      <div class="legend">
        <span class="name">盛德鑫泰 (日线.前复权)</span>${icon(ICON.chevron, 20)}
        ${legendItems([["MA5: 25.62", "m-w", "up"], ["MA10: 25.22", "m-y", "up"], ["MA20: 22.89", "m-p", "up"], ["MA60: 22.01", "m-g", "up"], ["MA120: 24.57", "m-s", "dn"], ["MA250: 28.70", "m-b", "dn"]])}
        <span class="end">${icon(ICON.diamond, 24)}${icon(ICON.panel, 24)}</span>
      </div>
      ${scale([["25.00", 183], ["22.50", 230], ["20.00", 276], ["17.50", 323], ["15.00", 369]], 76, 413)}
      ${at(926, 118, "", "29.00")} ${at(472, 388, "", "13.92")}
      ${at(879, 323, "big", html`长短期均线<br />粘合顺上<span class="thin">↑</span>`)}
      ${at(848, 402, "tag", html`<b class="t1">涨</b><b class="t2">榜</b>`)}
      ${at(998, 402, "tag", html`<b class="t3">预</b>`)}
    </section>`;
  }

  private volumePane() {
    const at = (x: number, y: number, cls: string, body: unknown) => note(x, y, 1187, 414, 237, cls, body);
    const solid = (k: string) => k === "r" || k === "e";
    return html`<section class="pane volume">
      <svg class="plot" viewBox="0 414 1187 237" preserveAspectRatio="none">
        ${dotted([480, 521, 563, 605], 1, 1111)} ${ticks([438, 480, 521, 563, 605], [459, 501, 542, 584])}
        <path class="rule" d="M1111.5 414V651" />
        ${RED_AREAS.map((a) => svg`<polygon points=${join(a)} fill="#f00" />`)}
        <polygon points="979,551 989,562 1001,549 990,547" fill="#006000" />
        <polygon points=${join([...VM10, ...[...VM20].reverse()])} fill="#80ff00" />
        <polygon points="550,603 610,603 642,600 722,597 722,603 600,609 550,610" fill="#006000" />
        ${VOLUME.map(([k, t], i) => (solid(k) ? nothing : volumeBar(k, t, i)))}
        <polygon points="1000,541 1006,533 1025,521 1038,523 1038,542 1013,545" fill="#80ff00" />
        ${volumeBar("c", 503, 55)}
        ${line(VM20, "#00e000")} ${line(VM10, "#ffff00")}
        ${VOL_LINES.map((l) => line(l.pts, l.color, 3))}
        ${line([[8, 625], [55, 625]], "#f0f0f0")} ${line(VM5, "#f0f0f0")}
        ${VOLUME.map(([k, t], i) => (solid(k) ? volumeBar(k, t, i) : nothing))}
        <path d="M8 647.500H1044" stroke="#c8b400" />
        <path d="M0 414l8 12-8 12z" fill="#585860" />
      </svg>
      <div class="legend">
        ${icon(ICON.chevron, 18)}<span class="name">龙量</span>
        ${legendItems([["二十日换手: 163.50", "m-w", "up"], ["V2: -0.10", "m-r", "up"], ["振阳: 5.18", "m-w", "up"], ["龙1: 26.06", "m-w", "dn"], ["龙2: 25.94", "m-y", "dn"], ["VM: 61669.78", "m-b", "dn"], ["VM5: 61288.36", "m-w", "up"], ["VM10: 58452.14", "m-y", "dn"]])}
      </div>
      ${scale([["100000", 438], ["80000", 480], ["60000", 521], ["40000", 562], ["20000", 604]], 414, 651)}
      ${at(977, 494, "pit", "黄金坑")} ${at(212, 625, "m-p", "金蜘蛛")}
    </section>`;
  }

  private macdPane() {
    return html`<section class="pane macd">
      <svg class="plot" viewBox="0 652 1187 158" preserveAspectRatio="none">
        ${dotted([690], 1, 1111)} ${ticks([690, 737], [714])}
        <rect x="1112" y="653" width="74" height="157" fill="none" stroke="#800000" stroke-width="2" />
        ${HIST.map((y, i) => svg`<path d="M${cx(i) + 0.5} 737V${y}" stroke=${y < 737 ? "#d83030" : "#00d0d0"} />`)}
        <path d="M0 737.500H1111" stroke="#00c800" />
        ${line(DIF, "#f0f0f0")} ${line(DEA, "#e0e000")}
      </svg>
      <div class="legend">
        ${icon(ICON.chevron, 18)}<span class="name">MACD(12,26,9)</span>
        ${legendItems([["DIF: 1.53", "m-w", "up"], ["DEA: 1.14", "m-y", "up"], ["MACD: 0.78", "m-p", "up"]])}
      </div>
      ${scale([["1.50", 690], ["0.00", 736]], 652, 810)}
    </section>`;
  }

  private kdjPane() {
    return html`<section class="pane kdj">
      <svg class="plot" viewBox="0 811 1187 172" preserveAspectRatio="none">
        ${dotted([863, 884, 915, 947, 968], 1, 1111)}
        <path class="rule" d="M1111.5 811V983" />
        ${line(series(K), "#f0f0f0")} ${line(series(D), "#e0e000")} ${line(series(J), "#e000e0")}
        ${bigArrow(864)}
      </svg>
      <div class="legend">
        ${icon(ICON.chevron, 18)}<span class="name">KDJ(9,3,3)</span>
        ${legendItems([["K: 59.23", "m-w", "up"], ["D: 59.34", "m-y", "dn"], ["J: 59.01", "m-p", "up"]])}
      </div>
      ${scale([["100.00", 862], ["80.00", 883], ["50.00", 915], ["20.00", 946], ["0.00", 967]], 811, 983)}
    </section>`;
  }

  private left() {
    const hot = (on: boolean) => classMap({ hot: on });
    return html`<div class="left">
      <div class="bar">
        <button class="pin" aria-label="侧栏">${icon(ICON.panel, 24)}</button>
        <div class="periods">${PERIODS.map((p) => html`<button class=${hot(p === "日线")}>${p}</button>`)}</div>
        <div class="actions">${ACTIONS.map((a) => html`<button class=${hot(a === "画线")}>${a}</button>`)}</div>
      </div>
      ${this.pricePane()} ${this.volumePane()} ${this.macdPane()} ${this.kdjPane()}
      <div class="dates">
        <span class="year">2024年</span><span class="weeks">2</span><span>3</span><span class="cur">--</span><span class="unit">日线</span>
      </div>
      <div class="tabs">
        <div class="tabset">
          ${TABS.map((t) => (t ? html`<button class=${hot(t === "MACD")}>${t}</button>` : html`<button class="blank" aria-label="空"></button>`))}
        </div>
        <button>指标B</button><button>模 板</button><button>+</button><button>−</button>
      </div>
      <div class="links">
        ${icon(ICON.win, 24)}
        <a href="#">关联报价</a><a href="#">交易查询</a><a href="#">资金流向</a>
        <a href="#" class="y">综合资讯</a><a href="#" class="y">板块资讯</a><a href="#" class="y">短线基因</a>
        <a href="#" class="r mine">扫雷宝</a>
        <a href="#" class="y far">图文F10</a><a href="#">侧边栏》</a>
      </div>
    </div>`;
  }

  private block(rows: Row[], extra = "") {
    return html`<div class="block ${extra}"><table>
      <colgroup><col class="c1" /><col class="c2" /><col class="c3" /><col /></colgroup>
      ${rows.map((r) => html`<tr><th scope="row">${r[0]}</th><td class=${r[2]}>${r[1]}</td><th scope="row">${r[3]}</th><td class=${r[5]}>${r[4]}</td></tr>`)}
    </table></div>`;
  }

  private middle() {
    const levels: [string, number, string][] = [["27.97", 674, "r"], ["27.40", 703, "r"], ["26.84", 731, "r"], ["26.27", 760, "r"], ["25.71", 788, "w"], ["25.14", 817, "g"], ["24.58", 846, "g"], ["24.01", 874, "g"], ["2517", 904, "y"], ["1888", 934, "y"], ["1258", 962, "y"], ["629", 991, "y"]];
    return html`<div class="mid">
      <div class="quote"><sub>R</sub><span>300881</span><span>盛德鑫泰</span><sup>③</sup></div>
      ${this.block([["委比", "63.42%", "r", "委差", "430", "r"]], "commit")}
      ${this.block(SELL)} ${this.block(BUY)} ${this.block(DEAL)} ${this.block(BASIC, "loose")}
      <section class="tick-chart">
        <div class="cap"><span>盛德鑫泰</span><span class="y">钢加工</span></div>
        <svg class="plot" viewBox="1187 674 321 345" preserveAspectRatio="none">
          ${dotted([703, 732, 761, 818, 846, 875, 932, 960, 989], 1188, 1508)}
          <path class="dots" d="M1268.500 674V1019M1428.500 674V1019" />
          <path class="rule" d="M1187 674.500H1507.500V1019M1347.500 674V1019M1187 789.500H1508M1187 905.500H1508" />
          ${intradayVolume().map(([x, y, t]) => svg`<rect x=${x} y=${y} width=${x < 1260 ? 2 : 1} height=${1019 - y} fill=${TONE[t]} />`)}
          ${line(AVG, "#e8e800")} ${line(intradayPrice(), "#f4f4f4", 1)}
        </svg>
        ${scale(levels, 643, 1019)}
      </section>
      <div class="modes">${["笔", "价", "细", "势", "联", "值", "主", "筹"].map((m) => html`<button class=${classMap({ on: m === "势" })}>${m}</button>`)}</div>
    </div>`;
  }

  private facts(rows: Fact[], extra = "") {
    const cell = (label: string, mark: string) => html`<th scope="row">${label}${mark ? html`<sup>${mark}</sup>` : nothing}</th>`;
    return html`<div class="facts ${extra}"><table>
      <colgroup><col class="c1" /><col class="c2" /><col class="c3" /><col /></colgroup>
      ${rows.map((r) => html`<tr>${cell(r[0], r[1])}<td>${r[2]}</td>${cell(r[3], r[4])}<td>${r[5]}</td></tr>`)}
    </table></div>`;
  }

  private side() {
    const profit: [string, number][] = [["202112", 45], ["202212", 63], ["202312", 98]];
    return html`<aside class="side">
      <div class="head"><span>300881</span><button>单季</button><button class="on-blue">同季</button><button>财报</button><button>更多..</button></div>
      <div class="profit">
        <div class="levels">${["1.31", "0.98", "0.65", "0.33", "0.00"].map((l) => html`<div>${l}</div>`)}</div>
        <div class="bars">${profit.map(([, h]) => html`<i style=${styleMap({ height: `${h}px` })}></i>`)}</div>
        <span class="unit">净利润(亿)</span>
        <div class="years">${profit.map(([y]) => html`<span>${y}</span>`)}</div>
      </div>
      ${this.facts(FACTS_A, "first")}
      <button class="more" aria-label="展开">∨</button>
      ${this.facts(FACTS_B)} ${this.facts(FACTS_C, "even")}
      <div class="holders"><table>
        <colgroup><col class="c1" /><col /><col /></colgroup>
        <tr><th scope="row">股东</th><td>23-09-30</td><td>23-06-30</td></tr>
        <tr><th scope="row">户数</th><td>8473</td><td>7021</td></tr>
        <tr><th scope="row">较上期</th><td>20.68%</td><td>11.76%</td></tr>
      </table></div>
      <a class="goods" href="#"><span>关联商品:不锈钢,涨幅-0.06%</span><span>&gt;</span></a>
      <div class="news"><a href="#">3月27日一季报预告:业绩大幅上升</a><a href="#">3月27日2023年度业绩快报</a><a href="#">2023年年报于4月23日披露</a></div>
      <div class="view"><span>眼光</span><button>今日</button><button class="on-blue">本周</button><button>本月</button><button>本年</button></div>
      <div class="votes"><span class="bull">看多</span><span class="n1">22人</span><span>10人</span><span class="bear">看空</span></div>
      <div class="split"><div class="up">${icon(ICON.thumb, 26)}<span>68%</span></div><div class="dn"><span>32%</span>${icon(ICON.thumb, 26)}</div></div>
      <div class="fund"><span>基金<sup>④</sup></span><span>51家</span><span></span><span>193万股</span><span>1.8%</span></div>
    </aside>`;
  }

  private footer() {
    const acts: [string, unknown][] = [["买入", ICON.down], ["卖出", ICON.up], ["撤单", ICON.cancel], ["普通持仓", ICON.home], ["信用持仓", ICON.home], ["帮助", ICON.help], ["沪深市场", ICON.market], ["期权交易", ICON.option]];
    const idx = [["上证", "3041.17", "30.51", "1.01%", "3646亿"], ["深证", "9400.85", "57.93", "0.62%", "4940亿"], ["北证", "845.79", "2.93", "0.35%", "47.92亿"]];
    const meter = (x: number, a: number, b: number, c: number, d: number) => svg`
      <rect x=${x + a} y="1" width=${b} height="10" fill="#f00" /><rect x=${x + c} y="1" width=${d} height="10" fill="#008800" />
      <path d="M${x + 1} 1h73v10h-73zM${x + 56} 1v10M${x + 19} 1v10" fill="none" stroke="#e8e8e8" stroke-width="1.500" />
      <path d="M${x + 6} 14h69" stroke="#f00" stroke-width="3" stroke-dasharray="9 3" />`;
    return html`<div class="trade">
        ${acts.map(([t, g]) => html`<button>${icon(g, 22)}<span>${t}</span></button>`)}
        <button class="add" aria-label="添加">+</button>
        <div class="ticker"><span>报：AI迈入视频时代影响几何</span><span>推动主要作物大面积单产提升，浙江出台工作方案</span><span>海南打造多种境外来华人员</span></div>
      </div>
      <footer class="status">
        ${icon(ICON.chevronLight, 20)}
        ${idx.map((r) => html`<div class="idx"><span>${r[0]}</span><span class="r">${r[1]}</span><span class="r">${r[2]}</span><span class="r">${r[3]}</span><span>${r[4]}</span></div>`)}
        <svg class="meters" width="154" height="16" viewBox="0 0 154 16" aria-hidden="true">${meter(0, 19, 17, 37, 10)}${meter(78, 20, 16, 36, 8)}</svg>
        ${icon(ICON.antenna, 22)}
        <span class="badge">3</span><span>已连接</span>
        <div class="tray">${[ICON.speaker, ICON.keyboard, ICON.pulse, ICON.dish, ICON.board].map((g) => icon(g, 24))}</div>
      </footer>`;
  }

  private floats() {
    return html`<div class="speed">
        <svg width="24" height="27" viewBox="0 0 24 27" aria-hidden="true">
          <path d="M12 1c3 2 7 3 11 3v10c0 6-5 10-11 12C6 24 1 20 1 14V4c4 0 8-1 11-3z" fill="#10b860" stroke="#3a78e0" stroke-width="2" />
          <path d="M7 13l4 5 7-9" fill="none" stroke="#fff" stroke-width="3" />
        </svg>
        <div class="dial">
          <svg width="62" height="62" viewBox="0 0 62 62" aria-hidden="true">
            <defs><linearGradient id="arc" x1="0" x2="1"><stop offset="0" stop-color="#80d050" /><stop offset=".5" stop-color="#40c0b8" /><stop offset="1" stop-color="#80d050" /></linearGradient></defs>
            <circle cx="31" cy="31" r="29" fill="#20232e" fill-opacity="0.6" stroke="#3c3f4c" stroke-width="3" />
            <path d="M3 40A29 29 0 0059 40" fill="none" stroke="url(#arc)" stroke-width="3" />
          </svg>
          <span class="pct">36<small>%</small></span>
        </div>
        <div class="rate"><svg width="8" height="12" viewBox="0 0 8 12"><path d="M4 0l4 5H5v7H3V5H0z" fill="#18a0ff" /></svg><span>0.1</span><small>K/s</small></div>
        <div class="rate"><svg width="8" height="12" viewBox="0 0 8 12"><path d="M4 12L0 7h3V0h2v7h3z" fill="#10c060" /></svg><span>0.1</span><small>K/s</small></div>
      </div>
      <div class="pill"><span>上海电影</span><span class="p">30.00</span><span class="c">-1.93%</span><button aria-label="搜索">${icon(ICON.search, 22)}</button></div>`;
  }

  render() {
    return html`${this.topBar()}
      <main class="main">${this.left()}${this.middle()}${this.side()}</main>
      ${this.footer()} ${this.floats()}`;
  }
}
